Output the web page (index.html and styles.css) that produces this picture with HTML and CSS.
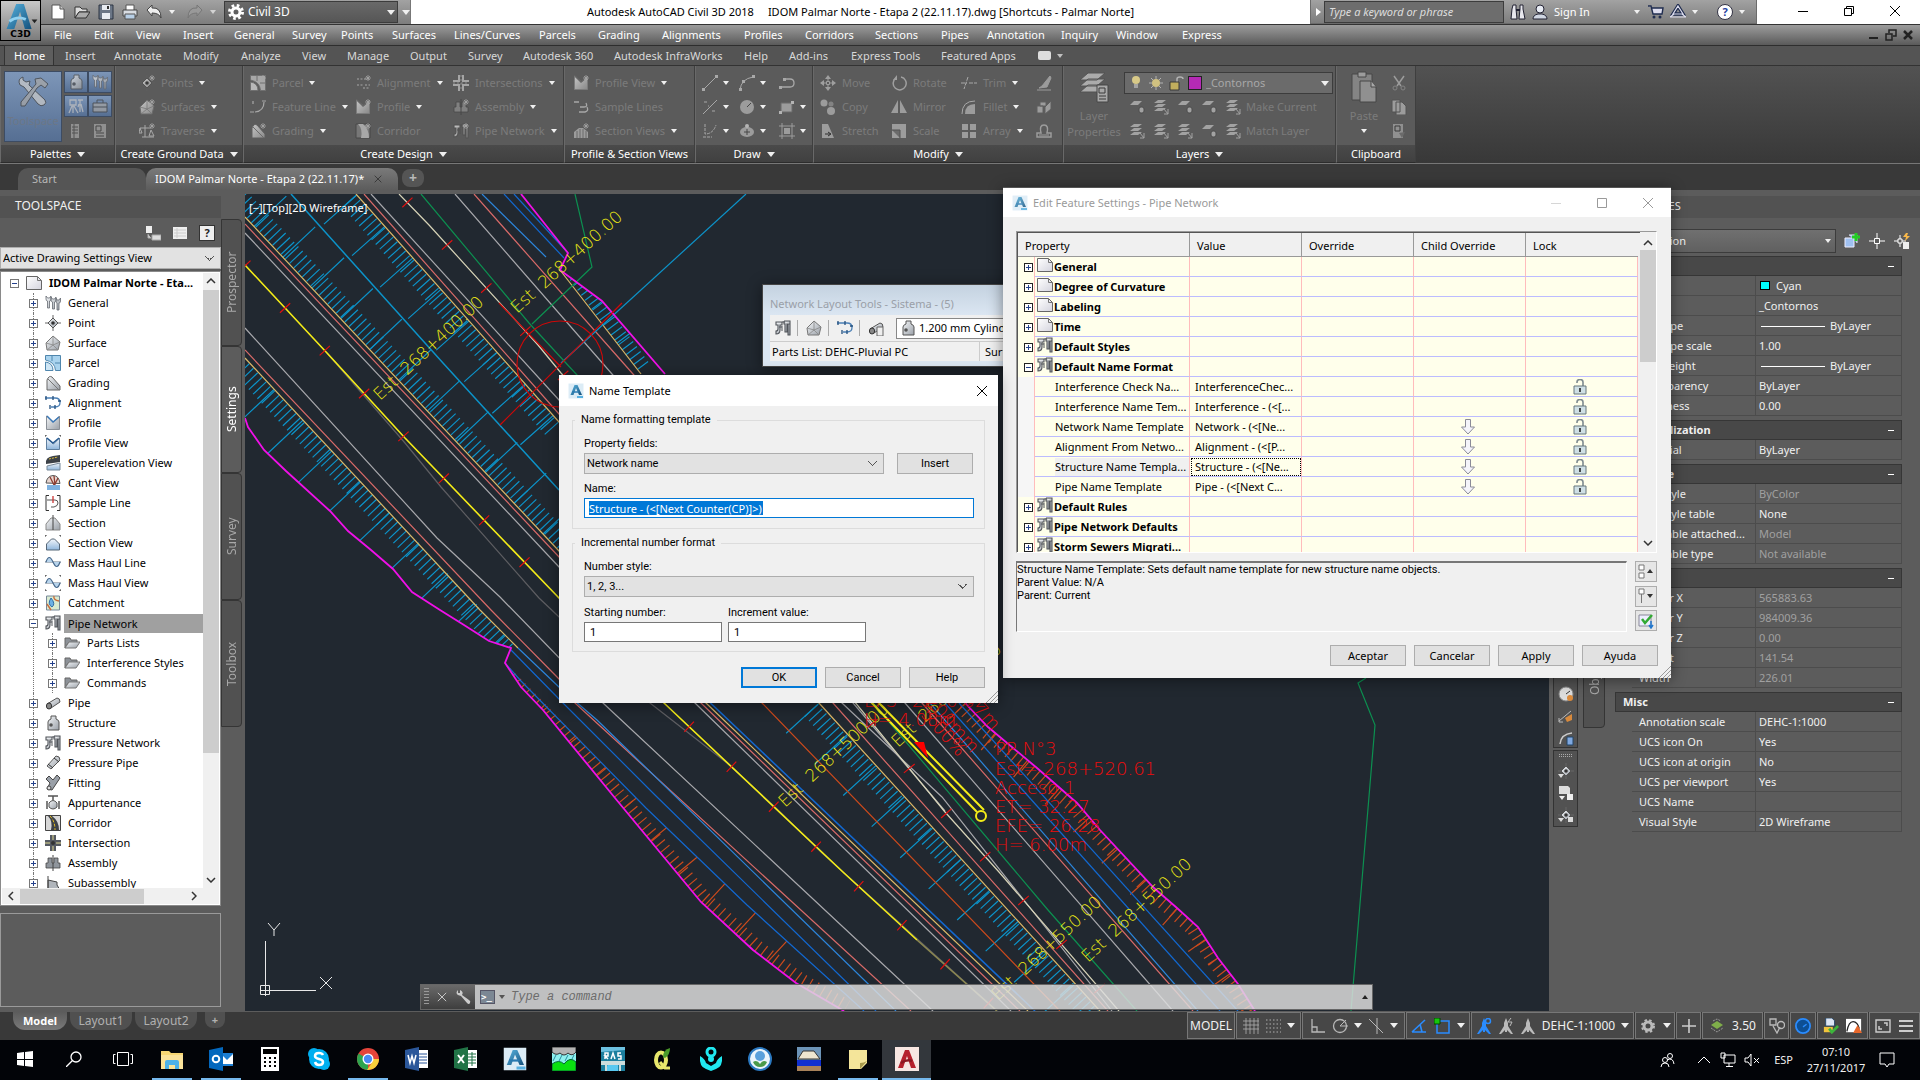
FILE: index.html
```html
<!DOCTYPE html>
<html lang="en">
<head>
<meta charset="utf-8">
<title>Autodesk AutoCAD Civil 3D 2018</title>
<link rel="stylesheet" href="styles.css">
</head>
<body>
<svg class="defs" aria-hidden="true">
<defs>
<linearGradient id="gm" x1="0" y1="0" x2="1" y2="1"><stop offset="0" stop-color="#f4f6f8"/><stop offset="1" stop-color="#9aa0a8"/></linearGradient>
<linearGradient id="gd" x1="0" y1="0" x2="1" y2="1"><stop offset="0" stop-color="#ffffff"/><stop offset="1" stop-color="#d4d4de"/></linearGradient>
<linearGradient id="gb" x1="0" y1="0" x2="0" y2="1"><stop offset="0" stop-color="#f2f6fb"/><stop offset="1" stop-color="#8fb6dc"/></linearGradient>
<linearGradient id="ga" x1="0" y1="0" x2="1" y2="1"><stop offset="0" stop-color="#58b4e0"/><stop offset="1" stop-color="#14507c"/></linearGradient>
</defs>
<symbol id="doc" viewBox="0 0 16 16"><path d="M.5 1.500h11l4 4v9H.5z" fill="url(#gd)" stroke="#666"/><path d="M11.500 1.500v4h4" fill="none" stroke="#777"/></symbol>
<symbol id="net" viewBox="0 0 16 16"><path d="M1 2h6v3H5v5q0 4-4 4v-3q2 0 2-2V5H1zM9 1h6v3M9 1v3h1v8h2V4h3v11h-2V4" fill="url(#gm)" stroke="#50545a" stroke-width="1.100"/><path d="M7 2h3M4 7h3M7 6v5" stroke="#50545a"/></symbol>
<symbol id="general" viewBox="0 0 16 16"><path d="M1 1v3q0 2 1.500 2v7h2V6Q6 6 6 4V1L4.500 3h-2zM6 2v3q0 2 1.500 2v7h2V7Q11 7 11 5V2L9.500 4h-2zM11 3v3q0 2 1 2v7h2V8q1.500 0 1.500-2V3L14 5h-2z" fill="url(#gm)" stroke="#666b72" stroke-width=".8"/></symbol>
<symbol id="point" viewBox="0 0 16 16"><path d="M8 0v16M0 8h16" stroke="#666"/><path d="M8 3l5 5-5 5-5-5z" fill="url(#gm)" stroke="#555"/><circle cx="8" cy="8" r="1.800" fill="#333"/></symbol>
<symbol id="surface" viewBox="0 0 16 16"><path d="M1 8l7-7 7 6-2 8H2z" fill="url(#gm)" stroke="#777"/><path d="M8 1v9l-7-2M8 10l7-3M8 10l-6 5M8 10l5 5" fill="none" stroke="#888" stroke-width=".8"/></symbol>
<symbol id="parcel" viewBox="0 0 16 16"><path d="M.5.500h15v15h-5Q10 7 .5 5z" fill="#a9d3ee" stroke="#4f86ad"/><path d="M.5 7Q8 8 8 15.500H.5zM7 1v5M10 8h5" fill="#cfe6f5" stroke="#4f86ad"/></symbol>
<symbol id="grading" viewBox="0 0 16 16"><path d="M2 5q2-5 5-3l8 9v4H2z" fill="url(#gm)" stroke="#666"/><path d="M3 4l11 11" stroke="#777"/></symbol>
<symbol id="align" viewBox="0 0 16 16"><path d="M0 3h10q5 0 5 4.500T10 12H6" fill="none" stroke="#4a7fb5" stroke-width="1.300"/><path d="M1 1v4M8 1v4M13 6h3M10 10v4M5 10v4" stroke="#24507e" stroke-width="1.300"/></symbol>
<symbol id="profile" viewBox="0 0 16 16"><path d="M1.500 1v13.500h13V1l-6 6z" fill="url(#gm)" stroke="#8a8f96"/><path d="M2 1l6 6 6-5" fill="none" stroke="#3a78b8" stroke-width="1.400"/></symbol>
<symbol id="profv" viewBox="0 0 16 16"><path d="M1.500 3v11.500h13V3l-6 6z" fill="url(#gb)" stroke="#5f7f9f"/><path d="M2 3l6 5 6-5" fill="none" stroke="#25588f" stroke-width="1.400"/><path d="M0 2V0h2M14 0h2v2" fill="none" stroke="#333"/></symbol>
<symbol id="super" viewBox="0 0 16 16"><path d="M1 9Q0 2 8 1l7-1v7z" fill="#3c4148"/><path d="M4 4l9-2" stroke="#e0c040" stroke-dasharray="2 1"/><path d="M2 11l13-3v7H2z" fill="url(#gb)" stroke="#789"/></symbol>
<symbol id="cant" viewBox="0 0 16 16"><path d="M1 8Q2 1 8 .5q6 0 7 8z" fill="#e8d6d0" stroke="#555"/><path d="M5 2l4 8M9 1l1 9M13 3l-3 6" stroke="#8c3c30" stroke-width="1.300"/><path d="M2 10h13v5H2z" fill="#7fb2e0"/></symbol>
<symbol id="sample" viewBox="0 0 16 16"><path d="M4 .5H1v15h3M12 .5h3v15h-3" fill="none" stroke="#333"/><path d="M2 5h8q3 0 3 3t-4 4H6" fill="none" stroke="#555"/><path d="M8 1v7" stroke="#c33" stroke-width="1.300"/></symbol>
<symbol id="section" viewBox="0 0 16 16"><path d="M1 15V9l5-6h4l5 6v6z" fill="url(#gm)" stroke="#888"/><path d="M8 0v15" stroke="#444"/></symbol>
<symbol id="sectv" viewBox="0 0 16 16"><path d="M1.500 15V9l5-5h3l5 5v6z" fill="url(#gb)" stroke="#567"/><path d="M0 2V0h2M14 0h2v2" fill="none" stroke="#333"/></symbol>
<symbol id="mass" viewBox="0 0 16 16"><path d="M0 7h16" stroke="#678"/><path d="M1 7q3-9 7 0t7 0" fill="#b8d4ec" stroke="#47698c" stroke-width="1.200"/></symbol>
<symbol id="massv" viewBox="0 0 16 16"><path d="M0 8h16" stroke="#678"/><path d="M1 8q3-9 7 0t7 0" fill="#b8d4ec" stroke="#47698c" stroke-width="1.200"/><path d="M0 2V0h2M14 0h2v2M0 14v2h2M14 16h2v-2" fill="none" stroke="#333"/></symbol>
<symbol id="catch" viewBox="0 0 16 16"><path d="M1.500 1h13v14h-13z" fill="#d9ead0" stroke="#789"/><path d="M2 9l4 6M9 1q-1 4 5 5" stroke="#c86c3c" fill="none" stroke-width="1.400"/><path d="M6 3q5 6 1 9-5-3-1-9z" fill="#6cb0e4" stroke="#2e6ea8"/></symbol>
<symbol id="folder" viewBox="0 0 16 16"><path d="M1 3h5l1 2h6v3H4l-3 5z" fill="#8c9197" stroke="#666"/><path d="M1 13l4-6h11l-4 6z" fill="url(#gm)" stroke="#777"/></symbol>
<symbol id="pipe" viewBox="0 0 16 16"><path d="M2 9L12 3q3 0 3 4L6 13z" fill="url(#gm)" stroke="#555"/><ellipse cx="4" cy="11" rx="2.600" ry="3" fill="#888" stroke="#333"/></symbol>
<symbol id="struct" viewBox="0 0 16 16"><path d="M6 1h5v3q3 1 3 3v8H3V7q0-2 3-3z" fill="url(#gm)" stroke="#555"/><circle cx="6" cy="10" r="1.800" fill="#555"/></symbol>
<symbol id="ppipe" viewBox="0 0 16 16"><path d="M2 11L11 1q4 0 4 4L6 14z" fill="url(#gm)" stroke="#555"/><path d="M3 9l5 4M9 3l5 4" stroke="#333"/></symbol>
<symbol id="fitting" viewBox="0 0 16 16"><path d="M1 4l3-3 4 4 4-5 3 3-8 12-5-1 3-6z" fill="#9aa0a8" stroke="#444"/><circle cx="4" cy="13" r="2" fill="#ddd" stroke="#444"/></symbol>
<symbol id="appurt" viewBox="0 0 16 16"><path d="M3 1h10M8 1v4M2 6v8M14 6v8" stroke="#555" stroke-width="1.500"/><path d="M4 8q4-5 8 0v4q-4 4-8 0z" fill="url(#gm)" stroke="#555"/></symbol>
<symbol id="corridor" viewBox="0 0 16 16"><path d="M.5.500h15v15H.5z" fill="#d8d8d8" stroke="#444"/><path d="M3 1h4q7 5 7 14H6Q8 6 3 1z" fill="#3c4148"/><path d="M5 1q5 5 5 14" stroke="#e8c020" fill="none" stroke-dasharray="3 1.500"/></symbol>
<symbol id="inter" viewBox="0 0 16 16"><path d="M5 0h6v5h5v6h-5v5H5v-5H0V5h5z" fill="#555a62"/><path d="M8 0v5M8 11v5M0 8h5M11 8h5" stroke="#e0d890"/><circle cx="8" cy="8" r="2" fill="#333"/></symbol>
<symbol id="cross" viewBox="0 0 16 16"><path d="M6 0v6H0M10 0v6h6M6 16v-6H0M10 16v-6h6" fill="none" stroke="#c8c8c8" stroke-width="2"/><path d="M8 0v16M0 8h16" stroke="#aaa" stroke-dasharray="2 2"/></symbol>
<symbol id="asm" viewBox="0 0 16 16"><path d="M3 3h4v5h2V3h4v5h2v5H1V8h2z" fill="#8f959c" stroke="#444" stroke-width=".8"/><path d="M8 0v16" stroke="#444"/></symbol>
<symbol id="sub" viewBox="0 0 16 16"><path d="M3 1v14M3 5l9 2v3l3 5H3z" fill="#b0b5bb" stroke="#444"/></symbol>
<symbol id="star" viewBox="0 0 16 16"><path d="M13 0v6M10 3h6M11 1l4 4M15 1l-4 4" stroke="#c8c8c8" stroke-width=".8"/></symbol>
<symbol id="logo" viewBox="0 0 16 16"><path d="M.5.500h15v15H.5z" fill="#dcecf6"/><path d="M6.500 2h3L14 12h-3l-3-7-2.500 7H2.500z" fill="url(#ga)"/><path d="M4 9h7" stroke="#2a7ab0" stroke-width="1.500"/><path d="M9 14h6" stroke="#58b0e0" stroke-width="2"/></symbol>
<symbol id="lock" viewBox="0 0 14 16"><path d="M4 4V3q0-2.500 3-2.500T10 3v4" fill="none" stroke="#7d8a8f" stroke-width="1.600"/><path d="M1 7h12v8H1z" fill="#cfe0e6" stroke="#66777d"/><path d="M7 9v4" stroke="#222" stroke-width="1.600"/></symbol>
<symbol id="down" viewBox="0 0 14 16"><path d="M4.500 .5h5V8h4L7 15 .5 8h4z" fill="#f4f4fa" stroke="#8b8b98"/></symbol>
<symbol id="lay" viewBox="0 0 16 16"><path d="M5 1h8l-4 3H1zM5 5h8l-4 3H1zM5 9h8l-4 3H1z" fill="#c4c4c4"/><path d="M11 10l4 5M15 10v5h-4" stroke="#c4c4c4" fill="none"/></symbol>
<symbol id="lay1" viewBox="0 0 16 16"><path d="M5 2h8L9 6H1z" fill="#c4c4c4"/><rect x="10" y="8" width="5" height="6" rx="2" fill="#c4c4c4" stroke="#4c4c4c"/></symbol>
<symbol id="arrows" viewBox="0 0 16 16"><path d="M8 0l3 4H5zM8 16l3-4H5zM0 8l4-3v6zM16 8l-4-3v6z" fill="#c0c0c0"/><path d="M8 4v2M8 10v2M4 8h2M10 8h2" stroke="#c0c0c0"/><path d="M6.500 6.500h3v3h-3z" fill="none" stroke="#c0c0c0"/></symbol>
<symbol id="rot" viewBox="0 0 16 16"><path d="M5 3a6.500 6.500 0 1 0 5-1" fill="none" stroke="#c0c0c0" stroke-width="1.500"/><path d="M6 0v5H2z" fill="#c0c0c0"/></symbol>
<symbol id="x" viewBox="0 0 12 12"><path d="M1 1l10 10M11 1L1 11" stroke="currentColor" fill="none"/></symbol>
<symbol id="chev" viewBox="0 0 10 6"><path d="M1 1l4 4 4-4" fill="none" stroke="currentColor" stroke-width="1.500"/></symbol>
<symbol id="tripod" viewBox="0 0 16 16"><path d="M8 0l2 5v3l5 8h-2l-4-4v2H7v-2l-4 4H1l5-8V5z" fill="currentColor"/></symbol>
</svg>

<header class="titlebar">
  <div class="qat">
    <button title="New"><svg><path d="M2 1h8l4 4v10H2z" fill="#fff" stroke="#555"/><path d="M10 1v4h4" fill="#ccc" stroke="#555"/></svg></button>
    <button title="Open"><svg><path d="M1 3h5l2 2h5v3H5l-4 6z" fill="#ddd" stroke="#333"/><path d="M1 14l4-6h11l-4 6z" fill="#aaa" stroke="#333"/></svg></button>
    <button title="Save"><svg><path d="M1 1h14v14H1z" fill="#6b7686" stroke="#2c3442"/><path d="M4 1h8v5H4zM4 9h8v6H4z" fill="#e8ecf2"/><path d="M9 2h2v3H9z" fill="#333"/></svg></button>
    <button title="Plot"><svg><path d="M4 1h8v6H4z" fill="#fff" stroke="#555"/><path d="M1 6h14v6H1z" fill="#d8dce2" stroke="#444"/><path d="M3 10h10v5H3z" fill="#b8cfe6" stroke="#555"/></svg></button>
    <button title="Undo"><svg><path d="M1 6l5-5v3q9-1 9 10-2-5-9-5v3z" fill="#eee" stroke="#444"/></svg></button><i class="ar"></i>
    <button title="Redo"><svg><path d="M15 6l-5-5v3Q1 3 1 14q2-5 9-5v3z" fill="#999" stroke="#777"/></svg></button><i class="ar dim"></i>
    <div class="combo wspick"><svg><circle cx="8" cy="8" r="4" fill="none" stroke="#fff" stroke-width="3"/><circle cx="8" cy="8" r="6.500" fill="none" stroke="#fff" stroke-width="3" stroke-dasharray="2.600 2.500"/></svg><select aria-label="Workspace"><option>Civil 3D</option></select><i class="ar big"></i></div>
    <i class="ar bar"></i>
  </div>
  <div class="caption"><span>Autodesk AutoCAD Civil 3D 2018</span><span>IDOM Palmar Norte - Etapa 2 (22.11.17).dwg [Shortcuts - Palmar Norte]</span></div>
  <div class="info">
    <i class="ar east"></i>
    <input type="text" aria-label="Search" placeholder="Type a keyword or phrase">
    <button title="Search"><svg><path d="M3 1h3v4l1 10H1l1-10zM10 1h3v4l2 10H9l1-10z" fill="#e8e8ee" stroke="#223"/><path d="M6 6h4" stroke="#223" stroke-width="2"/></svg></button>
    <button class="sign"><svg><circle cx="8" cy="5" r="4" fill="#e8ecf4" stroke="#223"/><path d="M1 15q0-4 5-5h4q5 1 5 5z" fill="#d0d6e2" stroke="#223"/></svg><span>Sign In</span><i class="ar"></i></button>
    <button title="Store"><svg><path d="M0 2h3l2 8h9l1-6H4" fill="#dde" stroke="#1f2c4f" stroke-width="1.400"/><circle cx="6" cy="13" r="1.500" fill="#1f2c4f"/><circle cx="12" cy="13" r="1.500" fill="#1f2c4f"/></svg></button>
    <button title="Autodesk App Store"><svg><path d="M8 2l5 8H3z" fill="none" stroke="#1f2c4f" stroke-width="3.500"/><path d="M8 2l5 8H3zM0 13l4-3h8l4 3z" fill="none" stroke="#dde" stroke-width="1.200"/></svg></button><i class="ar"></i>
    <button class="help" title="Help">?</button><i class="ar"></i>
  </div>
  <div class="wins">
    <button title="Minimize"><svg viewBox="0 0 12 12"><path d="M1 6.500h10" stroke="#000"/></svg></button>
    <button title="Restore"><svg viewBox="0 0 12 12"><path d="M1.500 3.500h7v7h-7zM3.500 3V1.500h7v7H9" fill="none" stroke="#000"/></svg></button>
    <button title="Close"><svg><use href="#x"/></svg></button>
  </div>
</header>

<nav class="menubar">
  <a href="#">File</a><a href="#">Edit</a><a href="#">View</a><a href="#">Insert</a><a href="#">General</a><a href="#">Survey</a><a href="#">Points</a><a href="#">Surfaces</a><a href="#">Lines/Curves</a><a href="#">Parcels</a><a href="#">Grading</a><a href="#">Alignments</a><a href="#">Profiles</a><a href="#">Corridors</a><a href="#">Sections</a><a href="#">Pipes</a><a href="#">Annotation</a><a href="#">Inquiry</a><a href="#">Window</a><a href="#">Express</a>
  <span class="mdi"><svg viewBox="0 0 12 12"><path d="M1 9h9" stroke="#222" stroke-width="2"/></svg><svg viewBox="0 0 12 12"><path d="M1 5h6v6H1zM4 4V1h7v6H8" fill="none" stroke="#222" stroke-width="1.500"/></svg><svg viewBox="0 0 12 12"><path d="M2 2l8 8M10 2l-8 8" stroke="#222" stroke-width="2.500"/></svg></span>
</nav>
<button class="app" title="Application menu"><svg viewBox="0 0 36 28"><path d="M13 1h8l8 26h-7L17 9l-6 18H3z" fill="url(#ga)"/><path d="M6 19q8-6 17-2" stroke="#8fd0f0" stroke-width="3" fill="none"/><path d="M29 17h6l-3 4z" fill="#222"/></svg><span>C3D</span></button>

<nav class="tabs">
  <a href="#" class="on">Home</a><a href="#">Insert</a><a href="#">Annotate</a><a href="#">Modify</a><a href="#">Analyze</a><a href="#">View</a><a href="#">Manage</a><a href="#">Output</a><a href="#">Survey</a><a href="#">Autodesk 360</a><a href="#">Autodesk InfraWorks</a><a href="#">Help</a><a href="#">Add-ins</a><a href="#">Express Tools</a><a href="#">Featured Apps</a>
  <span class="mini"><b></b><i class="ar dim"></i></span>
</nav>

<section class="ribbon">
  <div class="panel p-pal">
    <div class="body">
      <button class="blue large"><svg viewBox="0 0 32 32"><path d="M6 1q-6 2-3 8l4 2 14 17q3 3 6 1t1-5L12 9l1-4-4 1-3-2z" fill="#d0d4da" stroke="#445"/><path d="M18 3l6-1 7 6-3 4-4-3-4 3L8 30H4v-4L19 8z" fill="#aab0ba" stroke="#445"/></svg>Toolspace</button>
      <div class="six">
        <button class="blue" title="Prospector"><svg><use href="#struct"/></svg></button><button class="blue" title="Settings"><svg><use href="#general"/></svg></button>
        <button class="blue" title="Survey"><svg><path d="M2 2h6v5H2zM5 7v8M4 8l-3 7M6 8l4 7M10 2h5M12 2v12M11 6l-1 3M13 6l2 8" fill="none" stroke="#ccc" stroke-width="1.300"/></svg></button><button class="blue" title="Toolbox"><svg><path d="M1 5h14v9H1z" fill="#aab" stroke="#445"/><path d="M5 5V2h6v3M1 9h14" fill="none" stroke="#445"/></svg></button>
        <button title="Palettes"><svg><path d="M3 1h8v14H3z" fill="#aaa"/><path d="M4 4h6M4 7h6M4 10h6M6 1v14" stroke="#555"/></svg></button><button title="Properties"><svg><path d="M2 1h12v14H2z" fill="#aaa"/><path d="M4 3h5v5H4zM4 10h8M4 13h8" fill="none" stroke="#444"/></svg></button>
      </div>
    </div>
    <h2>Palettes <i class="ar big"></i></h2>
  </div>
  <div class="panel p-ground">
    <div class="body">
      <button><svg><use href="#point"/><use href="#star"/></svg>Points<i class="ar"></i></button>
      <button><svg><use href="#surface"/><use href="#star"/></svg>Surfaces<i class="ar"></i></button>
      <button><svg><path d="M6 2v12M1 5h11M1 5l-1 5h3zM12 7l-2 6h5zM3 14h12" fill="none" stroke="#ccc"/><use href="#star"/></svg>Traverse<i class="ar"></i></button>
    </div>
    <h2>Create Ground Data <i class="ar big"></i></h2>
  </div>
  <div class="panel p-design">
    <div class="body">
      <button><svg><use href="#parcel"/><use href="#star"/></svg>Parcel<i class="ar"></i></button>
      <button><svg><path d="M2 4h12M2 10h6M10 10h5M8 13h6" stroke="#ccc" stroke-dasharray="2 1.500"/><use href="#star"/></svg>Alignment<i class="ar"></i></button>
      <button><svg><use href="#cross"/></svg>Intersections<i class="ar"></i></button>
      <button><svg><path d="M14 3q0 9-9 10M0 13h4M3 2v3M12 2h4" fill="none" stroke="#ccc" stroke-width="1.200"/></svg>Feature Line<i class="ar"></i></button>
      <button><svg><use href="#profile"/><use href="#star"/></svg>Profile<i class="ar"></i></button>
      <button><svg><use href="#asm"/><use href="#star"/></svg>Assembly<i class="ar"></i></button>
      <button><svg><use href="#grading"/><use href="#star"/></svg>Grading<i class="ar"></i></button>
      <button><svg><path d="M1 1h14v14H1z" fill="#888" stroke="#444"/><path d="M3 1h5q6 5 6 14H6Q8 6 3 1z" fill="#ccc"/><use href="#star"/></svg>Corridor</button>
      <button><svg><use href="#net"/><use href="#star"/></svg>Pipe Network<i class="ar"></i></button>
    </div>
    <h2>Create Design <i class="ar big"></i></h2>
  </div>
  <div class="panel p-prof">
    <div class="body">
      <button><svg><use href="#profile"/><use href="#star"/></svg>Profile View<i class="ar"></i></button>
      <button><svg><path d="M1 3h5M7 8h4q4 0 2-4M6 13h6q4-1 2-5" fill="none" stroke="#ccc" stroke-width="1.300"/></svg>Sample Lines</button>
      <button><svg><path d="M1 15V9l5-4h4l5 4v6z" fill="#bbb"/><path d="M4 8v7M7 6v9M10 6v9M13 8v7" stroke="#777"/><use href="#star"/></svg>Section Views<i class="ar"></i></button>
    </div>
    <h2>Profile &amp; Section Views</h2>
  </div>
  <div class="panel p-draw">
    <div class="body">
      <button title="Line"><svg><path d="M2 14L14 2" stroke="#ccc"/><path d="M0 13h3v3H0zM13 0h3v3h-3z" fill="#ccc"/></svg><i class="ar"></i></button>
      <button title="Arc"><svg><path d="M1 15Q2 4 14 2" fill="none" stroke="#ccc"/><path d="M0 13h3v3H0zM13 0h3v3h-3zM3 5h3v3H3z" fill="#ccc"/></svg><i class="ar"></i></button>
      <button title="Polyline"><svg><path d="M3 12h8q4 0 4-4t-4-4H5" fill="none" stroke="#ccc" stroke-width="1.300"/><path d="M0 11h3v3H0zM4 3h3v3H4z" fill="#ccc"/></svg></button>
      <button title="Construction line"><svg><path d="M1 15L15 1" stroke="#ccc"/><path d="M2 3h3M10 12h3M6 7h1" stroke="#ccc"/></svg><i class="ar"></i></button>
      <button title="Circle"><svg><circle cx="8" cy="8" r="7" fill="#bbb"/><path d="M8 8l4-4" stroke="#444"/></svg><i class="ar"></i></button>
      <button title="Rectangle"><svg><path d="M2 4h11v9H2z" fill="#bbb" stroke="#777"/><path d="M0 12h3v3H0zM12 2h3v3h-3z" fill="#ddd"/></svg><i class="ar"></i></button>
      <button title="Curve"><svg><path d="M3 1v10q8 0 11-9M1 14h9" fill="none" stroke="#ccc" stroke-dasharray="3 1"/></svg><i class="ar"></i></button>
      <button title="Ellipse"><svg><ellipse cx="8" cy="9" rx="7" ry="5" fill="#bbb"/><path d="M8 6v6M5 9h6" stroke="#444"/><circle cx="8" cy="3" r="2" fill="#ddd"/></svg><i class="ar"></i></button>
      <button title="Hatch"><svg><path d="M3 0v16M13 0v16M0 3h16M0 13h16" stroke="#bbb"/><path d="M5 5h6v6H5z" fill="#bbb"/></svg><i class="ar"></i></button>
    </div>
    <h2>Draw <i class="ar big"></i></h2>
  </div>
  <div class="panel p-mod">
    <div class="body">
      <button><svg><use href="#arrows"/></svg>Move</button>
      <button><svg><use href="#rot"/></svg>Rotate</button>
      <button><svg><path d="M0 8h6M8 8h8M7 2L3 14" stroke="#ccc" stroke-dasharray="4 1"/></svg>Trim<i class="ar"></i></button>
      <button title="Erase"><svg><path d="M14 1L6 11l-3 2 8-1 4-9zM1 15h14" fill="#bbb" stroke="#bbb"/></svg></button>
      <button><svg><circle cx="4" cy="4" r="3.500" fill="#bbb"/><circle cx="11" cy="5" r="2.500" fill="#999"/><circle cx="11" cy="12" r="4" fill="#bbb"/></svg>Copy</button>
      <button><svg><path d="M7 1v13H0zM9 1v13h7z" fill="#bbb"/></svg>Mirror</button>
      <button><svg><path d="M1 15Q1 2 14 2" fill="none" stroke="#ccc"/><path d="M4 15Q4 5 14 5v10z" fill="#bbb"/></svg>Fillet<i class="ar"></i></button>
      <button title="Explode"><svg><path d="M1 7h6v7H1zM4 3h6v4H4zM9 8l6-6v8l-6 5z" fill="#bbb" stroke="#666"/></svg></button>
      <button><svg><path d="M2 1h6l6 14H2z" fill="#bbb"/><path d="M5 11h5M8 9l3 2-3 2" stroke="#222" fill="none"/></svg>Stretch</button>
      <button><svg><path d="M1 1h14v14H1z" fill="#bbb"/><path d="M1 7h8v8" fill="#777" stroke="#555"/></svg>Scale</button>
      <button><svg><path d="M1 1h6v6H1zM9 1h6v6H9zM1 9h6v6H1zM9 9h6v6H9z" fill="#bbb"/></svg>Array<i class="ar"></i></button>
      <button title="Offset"><svg><path d="M1 14h14v-4h-4q2-8-3-8t-3 8H1z" fill="none" stroke="#bbb" stroke-width="1.500"/><path d="M3 12h10" stroke="#bbb"/></svg></button>
    </div>
    <h2>Modify <i class="ar big"></i></h2>
  </div>
  <div class="panel p-lay">
    <div class="body">
      <button class="large"><svg viewBox="0 0 32 32"><path d="M10 2h17l-8 7H2zM10 8h17l-8 7H2zM10 14h17l-8 7H2z" fill="#d0d0d0" stroke="#555"/><path d="M19 14h11v17H19z" fill="#ccc" stroke="#444"/><path d="M21 17h6v5h-6zM21 25h7M21 28h7" fill="none" stroke="#333"/></svg>Layer<br>Properties</button>
      <div class="layr">
        <div class="combo laypick"><svg><circle cx="8" cy="5" r="4" fill="#e4d48c"/><path d="M6 9h4v4H6z" fill="#aaa"/></svg><svg><circle cx="8" cy="8" r="4" fill="#dccb84"/><path d="M8 1v3M8 12v3M1 8h3M12 8h3M3 3l2 2M11 11l2 2M13 3l-2 2M3 13l2-2" stroke="#bbb"/></svg><svg><path d="M9 7V4q0-2 3-2t3 2" fill="none" stroke="#bbb" stroke-width="1.500"/><path d="M2 7h9v8H2z" fill="#cbb65c" stroke="#333"/></svg><b class="sw"></b><select aria-label="Layer"><option>_Contornos</option></select><i class="ar big"></i></div>
        <div class="lrow"><svg><use href="#lay1"/></svg><svg><use href="#lay"/></svg><svg><use href="#lay1"/></svg><svg><use href="#lay1"/></svg><svg><use href="#lay"/></svg><span>Make Current</span></div>
        <div class="lrow"><svg><use href="#lay"/></svg><svg><use href="#lay"/></svg><svg><use href="#lay"/></svg><svg><use href="#lay1"/></svg><svg><use href="#lay"/></svg><span>Match Layer</span></div>
      </div>
    </div>
    <h2>Layers <i class="ar big"></i></h2>
  </div>
  <div class="panel p-clip">
    <div class="body">
      <button class="large"><svg viewBox="0 0 32 32"><path d="M4 3h20v26H4z" fill="#9a9a9a" stroke="#444"/><path d="M10 1h8v5h-8z" fill="#bbb" stroke="#444"/><path d="M12 10h11l5 6v15H12z" fill="#aaa" stroke="#444"/><path d="M23 10v6h5" fill="#ccc" stroke="#444"/></svg>Paste<i class="ar"></i></button>
      <div class="three">
        <svg><path d="M3 1l7 10M13 1L6 11" stroke="#bbb" stroke-width="1.500"/><circle cx="4" cy="13" r="2" fill="none" stroke="#999"/><circle cx="12" cy="13" r="2" fill="none" stroke="#999"/></svg>
        <svg><path d="M1 1h8v12H1zM5 3h6l4 4v9H5z" fill="#bbb" stroke="#555"/></svg>
        <svg><path d="M2 1h10v14H2z" fill="#aaa"/><path d="M4 3h5v5H4z" fill="none" stroke="#333"/><path d="M8 10l6-1-3 6z" fill="#777"/></svg>
      </div>
    </div>
    <h2>Clipboard</h2>
  </div>
</section>

<nav class="files">
  <a href="#" class="ft">Start</a>
  <a href="#" class="ft on">IDOM Palmar Norte - Etapa 2 (22.11.17)* <svg><use href="#x"/></svg></a>
  <button class="plus">+</button>
</nav>

<main class="work">
  <aside class="toolspace">
    <div class="tsmain">
      <h1>TOOLSPACE</h1>
      <div class="tsbar">
        <button title="Item view"><svg><path d="M1 1h6v7H1z" fill="#eee"/><path d="M7 10h9v5H7zM3 9v4h3" fill="#ddd" stroke="#aaa"/></svg></button>
        <button title="Preview"><svg><path d="M1 2h14v12H1z" fill="#eee"/><path d="M5 3v10M2 5h12M2 8h12M2 11h12" stroke="#ccc"/></svg></button>
        <button class="q" title="Help">?</button>
      </div>
      <select class="light" aria-label="View"><option>Active Drawing Settings View</option></select>
      <div class="treebox">
        <ul class="tree">
          <li class="root"><i class="ex minus"></i><svg><use href="#doc"/></svg><span>IDOM Palmar Norte - Eta...</span></li>
          <li><i class="ex"></i><svg><use href="#general"/></svg><span>General</span></li>
          <li><i class="ex"></i><svg><use href="#point"/></svg><span>Point</span></li>
          <li><i class="ex"></i><svg><use href="#surface"/></svg><span>Surface</span></li>
          <li><i class="ex"></i><svg><use href="#parcel"/></svg><span>Parcel</span></li>
          <li><i class="ex"></i><svg><use href="#grading"/></svg><span>Grading</span></li>
          <li><i class="ex"></i><svg><use href="#align"/></svg><span>Alignment</span></li>
          <li><i class="ex"></i><svg><use href="#profile"/></svg><span>Profile</span></li>
          <li><i class="ex"></i><svg><use href="#profv"/></svg><span>Profile View</span></li>
          <li><i class="ex"></i><svg><use href="#super"/></svg><span>Superelevation View</span></li>
          <li><i class="ex"></i><svg><use href="#cant"/></svg><span>Cant View</span></li>
          <li><i class="ex"></i><svg><use href="#sample"/></svg><span>Sample Line</span></li>
          <li><i class="ex"></i><svg><use href="#section"/></svg><span>Section</span></li>
          <li><i class="ex"></i><svg><use href="#sectv"/></svg><span>Section View</span></li>
          <li><i class="ex"></i><svg><use href="#mass"/></svg><span>Mass Haul Line</span></li>
          <li><i class="ex"></i><svg><use href="#massv"/></svg><span>Mass Haul View</span></li>
          <li><i class="ex"></i><svg><use href="#catch"/></svg><span>Catchment</span></li>
          <li class="sel"><i class="ex minus"></i><svg><use href="#net"/></svg><span>Pipe Network</span></li>
          <li class="kid"><i class="ex"></i><svg><use href="#folder"/></svg><span>Parts Lists</span></li>
          <li class="kid"><i class="ex"></i><svg><use href="#folder"/></svg><span>Interference Styles</span></li>
          <li class="kid"><i class="ex"></i><svg><use href="#folder"/></svg><span>Commands</span></li>
          <li><i class="ex"></i><svg><use href="#pipe"/></svg><span>Pipe</span></li>
          <li><i class="ex"></i><svg><use href="#struct"/></svg><span>Structure</span></li>
          <li><i class="ex"></i><svg><use href="#net"/></svg><span>Pressure Network</span></li>
          <li><i class="ex"></i><svg><use href="#ppipe"/></svg><span>Pressure Pipe</span></li>
          <li><i class="ex"></i><svg><use href="#fitting"/></svg><span>Fitting</span></li>
          <li><i class="ex"></i><svg><use href="#appurt"/></svg><span>Appurtenance</span></li>
          <li><i class="ex"></i><svg><use href="#corridor"/></svg><span>Corridor</span></li>
          <li><i class="ex"></i><svg><use href="#inter"/></svg><span>Intersection</span></li>
          <li><i class="ex"></i><svg><use href="#asm"/></svg><span>Assembly</span></li>
          <li><i class="ex"></i><svg><use href="#sub"/></svg><span>Subassembly</span></li>
        </ul>
        <div class="vsb"><svg class="up"><use href="#chev"/></svg><b></b><svg><use href="#chev"/></svg></div>
        <div class="hsb"><svg class="lf"><use href="#chev"/></svg><b></b><svg class="rt"><use href="#chev"/></svg></div>
      </div>
      <div class="preview"></div>
    </div>
    <nav class="vtabs"><a href="#">Prospector</a><a href="#" class="on">Settings</a><a href="#">Survey</a><a href="#">Toolbox</a></nav>
  </aside>

  <section class="canvas">
    <svg viewBox="245 194 1304 817" preserveAspectRatio="xMinYMin slice">
      <defs>
        <clipPath id="cutL"><path d="M245 358L518 648L511 648L489 641L464 625L440 610L412 592L393 569L371 550L348 531L330 511L286 471L264 450L248 427L245 417z"/></clipPath>
        <clipPath id="cutR"><path d="M566 275L660 400L690 400L602 301L560 270z"/></clipPath>
        <clipPath id="fillL"><path d="M505 663L521 687L543 710L615 798L701 902L753 950L796 983L844 1011L864 1011L747 905L646 808L522 680z"/></clipPath>
        <clipPath id="fillR"><path d="M965 703L988 727L1037 768L1077 803L1100 830L1154 888L1177 908L1198 927L1218 958L1238 984L1255 1011L1100 1011L900 703z"/></clipPath>
      </defs>
      <g class="ln cy">
        <g class="h19"><path d="M232 189L566 544"/><path d="M349 201L552 429"/><path d="M811 710L1093 1018"/></g>
        <g class="h44"><path d="M241 180L575 536"/><path d="M340 209L543 437"/><path d="M802 718L1084 1026"/></g>
        <g clip-path="url(#cutL)"><path class="h19" d="M238 365L511 655"/><path class="long" d="M245 358L518 648"/></g>
        <g clip-path="url(#cutR)"><path class="h19 w30" d="M566 275L640 374"/><path class="long" d="M566 275L640 374"/></g>
      </g>
      <g class="ln or">
        <g clip-path="url(#fillL)"><path class="h24" d="M505 663L521 687L543 710L615 798L701 902L753 950L796 983L844 1011"/><path class="long" d="M543 710L701 902L796 990"/></g>
        <g clip-path="url(#fillR)"><path class="h24" d="M965 703L988 727L1037 768L1077 803L1100 830L1154 888L1177 908L1198 927L1218 958L1238 984L1255 1011"/><path class="h44" d="M965 703L988 727L1037 768L1077 803L1154 888L1198 927L1238 984L1255 1011"/></g>
        <path d="M720 658L762 703L1060 1011"/>
      </g>
      <g class="ln gy">
        <path d="M245 328L437 538L500 597L603 703L933 1011"/><path d="M245 233L560 568L695 703L1011 1011"/>
        <path d="M371 194L559 400L842 703L942 797L1112 1011"/><path d="M455 194L612 374L905 703L1173 1011"/><path d="M842 690L945 811"/>
      </g>
      <path class="ln dk" d="M327 353L405 443L441 487L539 598L650 703L727 763L776 808L822 853L997 1011"/>
      <g class="ln sa"><path d="M245 350L491 610L560 680L575 703L911 1011"/><path d="M245 224L560 558L701 703L1020 1011"/><path d="M364 194L559 414L833 703L1108 1011"/><path d="M474 194L633 374L922 703L1193 1011"/></g>
      <g class="ln tan"><path d="M245 358L480 610L518 648"/><path d="M245 217L559 551L706 703L1028 1011"/><path d="M356 194L559 422L819 703L1100 1011"/><path d="M560 270L641 374"/></g>
      <g class="ln bl"><path d="M518 648L560 688L597 720L896 1011"/><path d="M482 194L546 257"/><path d="M930 703L1198 1011"/></g>
      <g class="ln nb"><path d="M504 194L564 258"/><path d="M514 194L568 253"/><path d="M945 703L1220 1011"/><path d="M959 703L1238 1011"/><path d="M505 663L521 681L646 808L747 905L864 1011"/><path d="M511 650L560 700L655 795L876 1011"/><path class="bold" d="M700 693L1035 1011"/></g>
      <g class="ln cy bold"><path d="M291 194L443 363L559 490"/><path class="thin" d="M746 194L561 363"/></g>
      <path class="ln cream" d="M399 194L429 225L538 345L561 373L845 690L945 812L999 872L1119 1011"/>
      <g class="ln grn"><path d="M421 194L529 323L577 375L873 703L1048 910L1137 1011"/><path d="M575 194L592 267L532 324"/><path d="M1366 678L1358 683L1375 725L1351 1011"/></g>
      <path class="ln yl" d="M245 265L327 353L405 438L559 598L664 703L844 873L917 940"/><path class="ln yl pale" d="M917 940L997 1011"/>
      <path class="ticks" d="M245 265L327 353L405 438L559 598L664 703L844 873L997 1011"/>
      <path class="ticks" d="M407 202L429 225L538 345L561 373L845 690L945 812L999 872L1119 1011"/>
      <g class="ln mg"><path d="M245 418L248 427L264 450L286 471L330 511L348 531L371 550L393 569L412 592L440 610L464 625L489 641L511 648L505 663L521 687L543 710L615 798L701 902L753 950L796 983L844 1011"/><path d="M521 194L568 253L560 270L602 301L665 374"/><path d="M965 703L988 727L1037 768L1077 803L1100 830L1154 888L1177 908L1198 927L1218 958L1238 984L1255 1011"/></g>
      <g class="ln rd"><circle cx="560" cy="364" r="43"/><path d="M499 303L561 367M622 303L500 425"/></g>
      <g class="ln ylb"><path d="M869 700L977 812M876 700L984 810"/><circle cx="981" cy="816" r="5"/></g>
      <path d="M914 742l14 16-4-16z" fill="#f00"/>
      <g class="cad">
        <text transform="translate(380 401) rotate(-43)">Est&#160; 268+400.00</text>
        <text transform="translate(517 314) rotate(-42)">Est&#160; 268+400.00</text>
        <text transform="translate(785 808) rotate(-43)">Est&#160; 268+500.00</text>
        <text transform="translate(898 748) rotate(-43)">Est&#160; 268+500.00</text>
        <text transform="translate(998 1001) rotate(-43)">Est&#160; 268+550.00</text>
        <text transform="translate(1088 963) rotate(-43)">Est&#160; 268+550.00</text>
      </g>
      <g class="cad red">
        <text x="864" y="726">H= 4.08m</text><text x="864" y="707">EFS=2270.02</text>
        <text x="995" y="755">PP N°3</text><text x="995" y="775">Est= 268+520.61</text><text x="995" y="794">Acceso 1</text><text x="995" y="813">ET= 32.27</text><text x="995" y="832">EFE= 26.28</text><text x="995" y="851">H= 6.00m</text>
        <text transform="translate(917 694) rotate(48)">1200mm</text><text transform="translate(920 715) rotate(48)">5.00%</text><text transform="translate(946 680) rotate(48)">0.277m</text>
      </g>
      <g class="ucs"><path d="M265.500 941v55M260 990.500h56M260.500 985.500h9v9h-9z"/><path d="M268 923l6 7 6-7M274 930v6M320 977l12 12M332 977l-12 12"/></g>
      <text class="vp" x="249" y="212">[−][Top][2D Wireframe]</text>
    </svg>
    <form class="cmd">
      <span class="grip"><i></i><svg><use href="#x"/></svg><svg><path d="M3 1q-3 3 0 5l3 1 6 7q2 2 3 0t-1-3L7 6q2-3-2-5l0 3-2 0z" fill="#ccc"/></svg></span>
      <b>&gt;_</b><i class="ar"></i><input type="text" aria-label="Command" placeholder="Type a command"><i class="ar upk"></i>
    </form>
  </section>

  <aside class="side">
    <div class="strip">
      <div class="grp g1"><svg><circle cx="8" cy="8" r="7" fill="#ddd" stroke="#888"/><path d="M8 8l4-3" stroke="#333"/><circle cx="12" cy="12" r="3" fill="#d98a3c"/></svg><svg><path d="M1 13L13 3M1 10v4h4" fill="none" stroke="#bbb"/><path d="M7 10l7-4v6l-5 2z" fill="#d98a3c"/></svg><svg><path d="M2 14Q3 4 14 3" fill="none" stroke="#ccc" stroke-width="1.500"/><path d="M9 7h6v8H9z" fill="#7fa8e0" stroke="#246"/></svg></div>
      <div class="grp"><i class="dots"></i><svg><use href="#point"/><path d="M0 11h6l-3 4z" fill="#ddd"/></svg><svg><path d="M1 1h9l2 2v6H1z" fill="#ddd"/><path d="M9 9h6v6H9zM1 11h6l-3 4z" fill="#eee"/></svg><svg><use href="#point"/><path d="M0 11h6l-3 4zM10 10h5v5h-5z" fill="#ddd"/></svg></div>
    </div>
    <div class="objtab"><a href="#">Object Class</a></div>
    <div class="props">
      <h1>PROPERTIES</h1>
      <div class="pick"><div class="combo"><select aria-label="Selection"><option>No selection</option></select><i class="ar"></i></div><svg><path d="M1 5h9v9H1zM5 2h8v8" fill="#9fc0f0" stroke="#eef"/><path d="M12 0v8M8 4h8" stroke="#2c2" stroke-width="3"/></svg><svg><path d="M8 0v16M0 8h16" stroke="#fff"/><path d="M5.500 5.500h5v5h-5z" fill="#5c5c5c" stroke="#fff"/></svg><svg><path d="M6 2v12M0 8h12" stroke="#fff"/><path d="M4 6h4v4H4z" fill="#5c5c5c" stroke="#fff"/><path d="M12 0l-3 4h3l-1 4 5-5h-3l1-3z" fill="#f8b84a"/><path d="M9 9h6v7H9z" fill="#eee"/></svg></div>
      <table><caption>General</caption>
        <tr><th>Color</th><td><b class="cyan"></b>Cyan</td></tr><tr><th>Layer</th><td>_Contornos</td></tr><tr><th>Linetype</th><td><b class="line"></b>ByLayer</td></tr><tr><th>Linetype scale</th><td>1.00</td></tr><tr><th>Lineweight</th><td><b class="line"></b>ByLayer</td></tr><tr><th>Transparency</th><td>ByLayer</td></tr><tr><th>Thickness</th><td>0.00</td></tr></table>
      <table><caption>3D Visualization</caption><tr><th>Material</th><td>ByLayer</td></tr></table>
      <table><caption>Plot style</caption><tr><th>Plot style</th><td class="ro">ByColor</td></tr><tr><th>Plot style table</th><td>None</td></tr><tr><th>Plot table attached...</th><td class="ro">Model</td></tr><tr><th>Plot table type</th><td class="ro">Not available</td></tr></table>
      <table><caption>View</caption><tr><th>Center X</th><td class="ro">565883.63</td></tr><tr><th>Center Y</th><td class="ro">984009.36</td></tr><tr><th>Center Z</th><td class="ro">0.00</td></tr><tr><th>Height</th><td class="ro">141.54</td></tr><tr><th>Width</th><td class="ro">226.01</td></tr></table>
      <table><caption>Misc</caption><tr><th>Annotation scale</th><td>DEHC-1:1000</td></tr><tr><th>UCS icon On</th><td>Yes</td></tr><tr><th>UCS icon at origin</th><td>No</td></tr><tr><th>UCS per viewport</th><td>Yes</td></tr><tr><th>UCS Name</th><td></td></tr><tr><th>Visual Style</th><td>2D Wireframe</td></tr></table>
    </div>
  </aside>
</main>

<footer class="status">
  <nav class="layouts"><a href="#" class="on">Model</a><a href="#">Layout1</a><a href="#">Layout2</a><button>+</button></nav>
  <div class="sb">
    <div class="s1"><button>MODEL</button></div>
    <div class="s2"><svg><path d="M3 0v16M7 0v16M11 0v16M15 0v16M0 3h16M0 7h16M0 11h16" stroke="#b0b0b0" stroke-width=".8"/></svg><svg><path d="M1 2h15M1 6h15M1 10h15M1 14h15" stroke="#b0b0b0" stroke-dasharray="1.500 2"/></svg><i class="ar big"></i></div>
    <div class="s3"><svg><path d="M2 1v13h13M2 9h5v5" fill="none" stroke="#b8b8b8" stroke-width="1.300"/></svg><svg><circle cx="8" cy="8" r="6.500" fill="none" stroke="#b8b8b8" stroke-width="1.300"/><path d="M8 8l6-6M8 8h8" stroke="#b8b8b8"/></svg><i class="ar big"></i><svg><path d="M1 1l14 14M9 0v16" stroke="#b8b8b8"/></svg><i class="ar big"></i></div>
    <div class="s4"><svg><path d="M1 14h14M1 14L14 2M9 6l2 8" stroke="#2a8cff" stroke-width="1.600" fill="none"/></svg><svg><path d="M3 3h12v12H3z" fill="none" stroke="#2a8cff" stroke-width="1.500"/><path d="M0 0h6v6H0z" fill="#16c60c" stroke="#040"/></svg><i class="ar big"></i></div>
    <div class="s5"><svg class="act"><use href="#tripod"/><circle cx="12" cy="3" r="2.500" fill="none" stroke="#2a8cff" stroke-width="1.500"/></svg><svg><use href="#tripod"/><path d="M13 0l-3 4h4l-2 4" stroke="#bbb" fill="none"/></svg><svg><use href="#tripod"/></svg><span>DEHC-1:1000</span><i class="ar big"></i></div>
    <div class="s6"><svg><circle cx="8" cy="8" r="4" fill="none" stroke="#bbb" stroke-width="3"/><circle cx="8" cy="8" r="6" fill="none" stroke="#bbb" stroke-width="2" stroke-dasharray="2.400 2.400"/></svg><i class="ar big"></i></div>
    <div class="s7"><svg><path d="M8 1v14M1 8h14" stroke="#ccc" stroke-width="1.600"/></svg></div>
    <div class="s8"><svg><path d="M8 3l6 4-6 4-6-4z" fill="#7fae4a"/><path d="M2 10l6 4 6-4M4 3l4-2 4 2" fill="none" stroke="#999" stroke-dasharray="2 1"/></svg><span>3.50</span></div>
    <div class="s9"><svg><path d="M1 1h6v6H1zM4 8l4 7 3-6" fill="none" stroke="#bbb" stroke-width="1.300"/><circle cx="12" cy="7" r="3.500" fill="none" stroke="#bbb" stroke-width="1.300"/></svg></div>
    <div class="s10"><svg viewBox="0 0 18 18"><circle cx="9" cy="9" r="8" fill="#0d4f94" stroke="#2a8cff" stroke-width="2"/><path d="M9 10l4-3" stroke="#2a8cff" stroke-width="1.500"/></svg></div>
    <div class="s11"><svg viewBox="0 0 18 18"><path d="M3 0h7l3 3v6H3z" fill="#dde6f4" stroke="#246"/><path d="M1 10h10v6H1z" fill="#f0c33c"/><path d="M7 12l3 4 7-7" stroke="#3cb43c" stroke-width="3" fill="none"/></svg><svg viewBox="0 0 18 18"><path d="M0 1h17v15H0z" fill="#fff"/><path d="M1 15Q3 4 8 4t7 8" fill="none" stroke="#222" stroke-width="1.400"/><path d="M13 8l5 9H8z" fill="#e8682c"/></svg></div>
    <div class="s12"><svg><path d="M1 2h14v12H1z" fill="none" stroke="#ccc" stroke-width="1.400"/><path d="M4 8v3h3M9 5h3v3" fill="none" stroke="#ccc" stroke-width="1.500"/></svg><svg><path d="M1 3h14M1 8h14M1 13h14" stroke="#ccc" stroke-width="1.800"/></svg></div>
  </div>
</footer>

<div class="taskbar">
  <button title="Start"><svg viewBox="0 0 16 16"><path d="M0 2l7-1v7H0zM8 1l8-1v8H8zM0 9h7v6l-7-1zM8 9h8v7l-8-1z" fill="#fff"/></svg></button>
  <button title="Search"><svg viewBox="0 0 16 16"><circle cx="10" cy="6" r="5" fill="none" stroke="#fff" stroke-width="1.300"/><path d="M6.500 9.500L0 16" stroke="#fff" stroke-width="1.300"/></svg></button>
  <button title="Task View"><svg class="wide" viewBox="0 0 20 16"><path d="M4.500 1.500h11v13h-11zM2.500 3.500h-2v9h2M17.500 3.500h2v9h-2" fill="none" stroke="#fff"/></svg></button>
  <button class="run" title="Explorer"><svg class="b" viewBox="0 0 24 24"><path d="M1 4h8l2 2h12v16H1z" fill="#f7d774"/><path d="M1 8h22v14H1z" fill="#fbe39a"/><path d="M5 22v-7q0-2 2-2h10q2 0 2 2v7h-4v-4H9v4z" fill="#4db2ea"/></svg></button>
  <button class="run" title="Outlook"><svg class="b" viewBox="0 0 24 24"><path d="M12 6h12v13H12z" fill="#1c7fd4"/><path d="M14 9l4 4 6-6v10H14z" fill="#fff"/><path d="M0 3l14-3v24L0 21z" fill="#0468bd"/><circle cx="7" cy="12" r="3.300" fill="none" stroke="#fff" stroke-width="2"/></svg></button>
  <button title="Calculator"><svg class="b" viewBox="0 0 24 24"><path d="M3 0h18v24H3z" fill="#fff"/><path d="M5 2h14v5H5z" fill="#000"/><path d="M6 11h13M6 15h13M6 19h13" stroke="#000" stroke-width="2" stroke-dasharray="2 3"/></svg></button>
  <button title="Skype"><svg class="b" viewBox="0 0 24 24"><circle cx="12" cy="12" r="10" fill="#00aff0"/><circle cx="7" cy="7" r="6" fill="#00aff0"/><circle cx="17" cy="17" r="6" fill="#00aff0"/><path d="M16 8q-1-2-4-2-4 0-4 3 0 2 4 3t4 3q0 3-4 3-3 0-4-3" fill="none" stroke="#fff" stroke-width="2.500"/></svg></button>
  <button class="run" title="Chrome"><svg class="b" viewBox="0 0 24 24"><circle cx="12" cy="12" r="11" fill="#e5443a"/><path d="M12 12L2.500 6.500A11 11 0 0 0 12 23z" fill="#2da44e"/><path d="M12 12h11A11 11 0 0 1 11 23l6-9z" fill="#f9cf3a"/><circle cx="12" cy="12" r="5.500" fill="#fff"/><circle cx="12" cy="12" r="4.200" fill="#4a8af4"/></svg></button>
  <button title="Word"><svg class="b" viewBox="0 0 24 24"><path d="M13 3h10v18H13z" fill="#fff"/><path d="M14 7h8M14 10h8M14 13h8M14 16h8" stroke="#2b579a"/><path d="M0 3l14-3v24L0 21z" fill="#2b579a"/><path d="M3 8l2 8 2-7 2 7 2-8" fill="none" stroke="#fff" stroke-width="1.500"/></svg></button>
  <button title="Excel"><svg class="b" viewBox="0 0 24 24"><path d="M13 3h10v18H13z" fill="#fff"/><path d="M14 7h8M14 10h8M14 13h8M14 16h8M18 5v14" stroke="#217346"/><path d="M0 3l14-3v24L0 21z" fill="#217346"/><path d="M4 8l6 8M10 8l-6 8" stroke="#fff" stroke-width="2"/></svg></button>
  <button title="Civil 3D"><svg class="b"><use href="#logo"/></svg></button>
  <button title="HEC-HMS"><svg class="b" viewBox="0 0 24 24"><path d="M0 0h24v24H0z" fill="#8ff0ee"/><path d="M4 8l-3 6M10 8l-3 6M16 8l-3 6M22 8l-3 6" stroke="#2a8ca0"/><path d="M0 0h24v5q-4 5-8 1-4 4-8 0-4 3-8-1z" fill="#b4b4b4" stroke="#333"/><path d="M0 17q7-5 12 0 6-8 12-2v9H0z" fill="#0ae010" stroke="#063"/></svg></button>
  <button title="HEC-RAS"><svg class="b" viewBox="0 0 24 24"><path d="M0 0h24v24H0z" fill="#1c7f9e"/><path d="M0 0h24v3L0 5z" fill="#6cc0e0"/><path d="M7 16h10v8H5z" fill="#58c8f0"/><path d="M1 15h22v2H1zM5 17v7M19 17v7" stroke="#cdd" stroke-width="2"/><path d="M4 12V6h3v3H4l3 3M10 12l2-6 2 6M20 6h-3v3h3v3h-3" stroke="#fff" stroke-width="1.500" fill="none"/></svg></button>
  <button title="QGIS"><svg class="b" viewBox="0 0 24 24"><ellipse cx="11" cy="13" rx="5" ry="7.500" fill="none" stroke="#e8e86c" stroke-width="4"/><path d="M10 15l5 6h5" stroke="#e8e86c" stroke-width="3" fill="none"/><path d="M13 10q0-7 7-9 0 7-5 10z" fill="#4a9a2a"/></svg></button>
  <button title="EPANET"><svg class="b" viewBox="0 0 24 24"><circle cx="12" cy="5" r="4" fill="none" stroke="#20e8f0" stroke-width="3"/><path d="M1 9q5 3 6 7l5 3 5-3q1-4 6-7 1 11-6 13l-5 2-5-2Q0 20 1 9z" fill="#20e8f0"/><circle cx="12" cy="12" r="3" fill="#20e8f0"/></svg></button>
  <button title="SWMM"><svg class="b" viewBox="0 0 24 24"><circle cx="12" cy="12" r="11" fill="#eaf4fc" stroke="#2a78c0" stroke-width="2"/><circle cx="12" cy="9" r="5" fill="#5aa0dc"/><path d="M5 15q4-3 7 2 3-5 7-2-2 5-7 5t-7-5z" fill="#4a9a4a"/></svg></button>
  <button title="Culvert"><svg class="b" viewBox="0 0 24 24"><path d="M0 0h24v24H0z" fill="#6c94b8"/><path d="M6 4h11l6 8H1z" fill="#ede6d0" stroke="#333"/><path d="M0 13h24v6H0z" fill="#1030d0"/><path d="M0 19h24v5H0z" fill="#a8825a"/></svg></button>
  <button class="run" title="Notes"><svg class="b" viewBox="0 0 24 24"><path d="M3 3h18v13l-6 6H3z" fill="#f4e59a"/><path d="M21 14l-7 8v-6q4 0 7-2z" fill="#a89a4c"/></svg></button>
  <button class="run cur" title="AutoCAD"><svg class="b" viewBox="0 0 24 24"><path d="M0 0h24v24H0z" fill="#f7e6e2"/><path d="M10 3h4l7 18h-5L12 9 8 21H3z" fill="#b5202c"/><path d="M6 16q6-4 11-2" stroke="#8c1822" stroke-width="2.500" fill="none"/></svg></button>
  <div class="tray">
    <svg><circle cx="10" cy="4" r="2.500"/><circle cx="5" cy="8" r="2.500"/><path d="M1 15q0-4 4-4t4 4M7 8q6-3 7 4"/></svg>
    <svg><path d="M2 11l6-6 6 6"/></svg>
    <svg><path d="M4 3h11v8H4zM9 11v4M6 14.500h7M1 1h4v5H1z"/></svg>
    <svg><path d="M1 6h3l3-4v12L4 10H1zM10 6l5 5M15 6l-5 5"/></svg>
    <span>ESP</span>
    <time>07:10<br>27/11/2017</time>
    <svg class="note"><path d="M1 1h14v11h-5l-2 3-2-3H1z"/></svg>
  </div>
</div>

<section class="win netwin">
  <h1>Network Layout Tools - Sistema - (5)</h1>
  <div class="nbar"><svg><use href="#net"/></svg><svg><use href="#surface"/></svg><svg><use href="#align"/></svg><svg><use href="#pipe"/><path d="M9 7h6v9H9z" fill="#eee" stroke="#666"/></svg><div class="combo"><svg><use href="#struct"/></svg><select aria-label="Structure"><option>1.200 mm Cylindric</option></select></div></div>
  <div class="nfoot"><span>Parts List: DEHC-Pluvial PC</span><span>Surface</span></div>
</section>

<section class="win feat">
  <header><svg><use href="#logo"/></svg><h1>Edit Feature Settings - Pipe Network</h1><svg class="c fade" viewBox="0 0 12 12"><path d="M1 6.500h10" stroke="currentColor"/></svg><svg class="c" viewBox="0 0 12 12"><path d="M1.500 1.500h9v9h-9z" fill="none" stroke="currentColor"/></svg><svg class="c"><use href="#x"/></svg></header>
  <div class="grid">
    <div class="gridclip">
    <table>
      <colgroup><col class="k0"><col class="k1"><col class="k2"><col class="k2"><col class="k2"><col class="k2"></colgroup>
      <thead><tr><th colspan="2">Property</th><th>Value</th><th>Override</th><th>Child Override</th><th>Lock</th></tr></thead>
      <tbody>
        <tr class="g"><td><i class="ex"></i></td><td><svg><use href="#doc"/></svg>General</td><td></td><td></td><td></td><td></td></tr>
        <tr class="g"><td><i class="ex"></i></td><td><svg><use href="#doc"/></svg>Degree of Curvature</td><td></td><td></td><td></td><td></td></tr>
        <tr class="g"><td><i class="ex"></i></td><td><svg><use href="#doc"/></svg>Labeling</td><td></td><td></td><td></td><td></td></tr>
        <tr class="g"><td><i class="ex"></i></td><td><svg><use href="#doc"/></svg>Time</td><td></td><td></td><td></td><td></td></tr>
        <tr class="g"><td><i class="ex"></i></td><td><svg><use href="#net"/></svg>Default Styles</td><td></td><td></td><td></td><td></td></tr>
        <tr class="g"><td><i class="ex minus"></i></td><td><svg><use href="#net"/></svg>Default Name Format</td><td></td><td></td><td></td><td></td></tr>
        <tr><td></td><td>Interference Check Na...</td><td>InterferenceChec...</td><td></td><td></td><td><svg><use href="#lock"/></svg></td></tr>
        <tr><td></td><td>Interference Name Tem...</td><td>Interference - (&lt;[...</td><td></td><td></td><td><svg><use href="#lock"/></svg></td></tr>
        <tr><td></td><td>Network Name Template</td><td>Network - (&lt;[Ne...</td><td></td><td><svg><use href="#down"/></svg></td><td><svg><use href="#lock"/></svg></td></tr>
        <tr><td></td><td>Alignment From Netwo...</td><td>Alignment - (&lt;[P...</td><td></td><td><svg><use href="#down"/></svg></td><td><svg><use href="#lock"/></svg></td></tr>
        <tr class="cursel"><td></td><td><span>Structure Name Templa...</span></td><td>Structure - (&lt;[Ne...</td><td></td><td><svg><use href="#down"/></svg></td><td><svg><use href="#lock"/></svg></td></tr>
        <tr><td></td><td>Pipe Name Template</td><td>Pipe - (&lt;[Next C...</td><td></td><td><svg><use href="#down"/></svg></td><td><svg><use href="#lock"/></svg></td></tr>
        <tr class="g"><td><i class="ex"></i></td><td><svg><use href="#net"/></svg>Default Rules</td><td></td><td></td><td></td><td></td></tr>
        <tr class="g"><td><i class="ex"></i></td><td><svg><use href="#net"/></svg>Pipe Network Defaults</td><td></td><td></td><td></td><td></td></tr>
        <tr class="g"><td><i class="ex"></i></td><td><svg><use href="#net"/></svg>Storm Sewers Migrati...</td><td></td><td></td><td></td><td></td></tr>
      </tbody>
    </table>
    </div>
    <div class="vsb"><svg class="up"><use href="#chev"/></svg><b></b><svg><use href="#chev"/></svg></div>
  </div>
  <div class="desc"><p>Structure Name Template: Sets default name template for new structure name objects.<br>Parent Value: N/A<br>Parent: Current</p>
    <div><button title="Expand all"><svg><path d="M1 1h5v5H1zM1 9h5v5H1z" fill="#fff" stroke="#777"/><path d="M9 9l3-4 3 4z" fill="#333"/></svg></button><button title="Collapse all"><svg><path d="M1 1h5v5H1zM3.500 6v9" fill="#fff" stroke="#777"/><path d="M9 6l3 4 3-4z" fill="#333"/></svg></button><button title="Override all"><svg><path d="M1 2h12v11H1z" fill="#eef" stroke="#889"/><path d="M4 6l3 4 7-8" fill="none" stroke="#3a3" stroke-width="2.500"/><path d="M13 8v6M11 12l2 3 2-3" stroke="#27c" stroke-width="1.500" fill="none"/></svg></button></div>
  </div>
  <div class="btns"><button>Aceptar</button><button>Cancelar</button><button>Apply</button><button>Ayuda</button></div>
  <svg class="gripc" viewBox="0 0 12 12"><path d="M12 0L0 12M12 4l-8 8M12 8l-4 4" stroke="#999"/></svg>
</section>

<section class="win name">
  <header><svg><use href="#logo"/></svg><h1>Name Template</h1><svg class="c"><use href="#x"/></svg></header>
  <form>
    <fieldset><legend>Name formatting template</legend>
      <label for="pf">Property fields:</label>
      <div class="row"><select class="light" id="pf"><option>Network name</option></select><button type="button">Insert</button></div>
      <label for="nm">Name:</label>
      <input id="nm" class="marked" type="text" value="Structure - (&lt;[Next Counter(CP)]&gt;)">
    </fieldset>
    <fieldset><legend>Incremental number format</legend>
      <label for="ns">Number style:</label>
      <select class="light" id="ns"><option>1, 2, 3...</option></select>
      <div class="pair"><div><label for="st">Starting number:</label><input id="st" type="text" value="1"></div><div><label for="iv">Increment value:</label><input id="iv" type="text" value="1"></div></div>
    </fieldset>
    <div class="btns"><button type="button" class="def">OK</button><button type="button">Cancel</button><button type="button">Help</button></div>
  </form>
  <svg class="gripc" viewBox="0 0 12 12"><path d="M12 0L0 12M12 4l-8 8M12 8l-4 4" stroke="#999"/></svg>
</section>
</body>
</html>
```
FILE: styles.css
```css
*{box-sizing:border-box}
body{margin:0;height:100vh;display:grid;grid-template-columns:minmax(0,1fr);grid-template-rows:24px 22px 20px 98px 26px minmax(0,1fr) 29px 40px;font:11px/16px "Noto Sans","Open Sans",sans-serif;background:#393939;color:#f0f0f0;overflow:hidden;position:relative}
a{color:inherit;text-decoration:none}
h1,h2,p,ul{margin:0;padding:0;font-size:11px;font-weight:400}
button,input,select{font:inherit;color:inherit}
button{background:none;border:0;padding:0;display:flex;align-items:center}
svg{width:16px;height:16px;flex:none;display:block}
.defs{position:absolute;width:0;height:0}
.ar{display:inline-block;flex:none;border:3px solid transparent;border-top:4px solid #f0f0f0;border-bottom:0}
.ar.big{border-width:4px;border-top-width:5px;border-bottom-width:0}
.ar.dim{opacity:.7}
.ar.east{border:4px solid transparent;border-left:5px solid #fff;border-right:0;margin-left:5px}
.ar.bar{border-width:4px;border-top-width:5px;border-bottom-width:0;box-shadow:0 -8px 0 -6px #fff}
.combo{display:flex;align-items:center}
.combo select{appearance:none;flex:1;min-width:0;background:none;border:0;padding:0}

/* title bar */
.titlebar{display:flex;background:#fff;color:#000;padding-left:40px}
.qat{width:371px;flex:none;display:flex;align-items:center;gap:8px;padding-left:10px;background:linear-gradient(#a2a2a2,#7d7d7d);border-right:1px solid #777}
.qat button+.ar{margin-left:-1px;margin-right:4px}
.wspick{width:179px;height:22px;margin-left:-4px;background:linear-gradient(#696969,#565656);border:1px solid #3c3c3c;color:#fff;padding:0 2px 0 3px;gap:4px}
.wspick select{font-size:12px}
.qat .bar{margin:0 0 0 -4px}
.caption{flex:1;min-width:0;display:flex;justify-content:center;align-items:center;gap:14px;white-space:nowrap}
.info{width:447px;flex:none;display:flex;align-items:center;gap:6px;background:linear-gradient(#a2a2a2,#7d7d7d);border:1px solid #6b6b6b;border-top:0;color:#fff}
.info input{width:180px;height:22px;margin-left:-3px;background:#6d6d6d;border:1px solid #3c3c3c;padding:0 4px;font-style:italic}
.info input::placeholder{color:#ddd;opacity:1}
.info .sign{width:110px;gap:6px}
.sign .ar{margin-left:auto;margin-right:2px}
.info .help{width:16px;height:16px;border-radius:50%;background:#fff;border:1px solid #334;color:#1f3f9f;font-weight:700;justify-content:center;margin-left:13px}
.wins{width:163px;flex:none;display:flex;align-items:center;justify-content:flex-end;gap:34px;padding-right:19px;padding-bottom:2px;color:#000}
.wins svg{width:12px;height:12px}

/* menus and ribbon tabs */
.menubar{display:grid;grid-template-columns:40px 42px 47px 51px 58px 49px 51px 62px 85px 59px 64px 82px 61px 70px 66px 46px 74px 55px 66px 1fr auto;align-items:center;padding:0 6px 0 54px;background:linear-gradient(#9c9c9c,#5a5a5a);border-top:1px solid #333;border-bottom:1px solid #2e2e2e;color:#fff}
.mdi{display:flex;gap:5px}
.mdi svg{width:12px;height:12px}
.app{position:absolute;left:0;top:0;width:41px;height:41px;flex-direction:column;justify-content:center;background:linear-gradient(#c8c8c8,#7c7c7c);border:1px solid #000;color:#000}
.app svg{width:36px;height:27px}
.app span{font:700 9px/9px "DejaVu Sans",sans-serif}
.tabs{display:grid;grid-template-columns:50px 49px 69px 58px 61px 45px 63px 58px 55px 91px 130px 45px 62px 90px 108px 1fr;align-items:center;padding-left:4px;background:#545454;border-bottom:1px solid #333;color:#d8d8d8;height:20px;line-height:20px}
.tabs a{padding-left:11px;height:19px}
.tabs .on{padding-left:9px;background:#5e5e5e;border:1px solid #333;border-width:0 1px;color:#fff;box-shadow:0 -1px 0 #333}
.mini{display:flex;gap:6px;align-items:center}
.mini b{width:13px;height:9px;background:#ddd;border-radius:2px}

/* ribbon */
.ribbon{display:flex;background:linear-gradient(#525252,#383838);border-bottom:1px solid #777;min-width:0}
.panel{display:flex;flex-direction:column;flex:none;background:#5b5b5b;border-right:1px solid #3f3f3f;border-left:1px solid #696969;border-bottom:1px solid #2c2c2c;padding-top:5px}
.panel .body{flex:1;display:grid;grid-auto-rows:24px;align-content:start;color:#7b7b7b}
.panel h2{height:17px;line-height:17px;text-align:center;background:linear-gradient(#4a4a4a,#404040);color:#fff;white-space:nowrap}
.panel h2 .ar{margin:0 0 1px 3px}
.panel .body button{gap:6px;height:24px;white-space:nowrap}
.panel .body svg{filter:grayscale(1) brightness(.95);opacity:.75}
.panel .body .large{flex-direction:column;height:auto;gap:5px;line-height:16px;justify-content:flex-start}
.large svg{width:32px;height:32px}
.p-pal{width:115px}.p-ground{width:128px}.p-design{width:321px}.p-prof{width:131px}.p-draw{width:118px}.p-mod{width:250px}.p-lay{width:273px}.p-clip{width:80px}
.panel.p-pal .body{display:flex;gap:2px;padding-left:3px}
.panel.p-pal .large{width:58px;height:71px;padding-top:4px;color:#6c7786}
.panel .body .blue{background:linear-gradient(#7d96b8,#566f93);border:1px solid #3d4c63}
.six{display:grid;grid-template-columns:24px 24px;grid-auto-rows:24px}
.six button{justify-content:center}
.panel .body .six .blue{height:22px}
.p-ground .body{padding-left:23px}
.p-design .body{padding-left:6px;grid-template-columns:105px 98px auto}
.p-prof .body{padding-left:8px}
.p-draw .body{padding-left:6px;grid-template-columns:37px 40px auto}
.panel.p-draw .body button{gap:5px}
.p-mod .body{padding-left:6px;grid-template-columns:71px 70px 75px 20px}
.panel.p-lay .body{grid-template-columns:60px 1fr;grid-auto-rows:auto}
.layr{display:grid;grid-template-rows:24px 24px 24px;align-items:center}
.laypick{width:209px;height:22px;background:#6b6b6b;border:1px solid #3c3c3c;padding:0 3px;gap:4px;color:#a8a8a8}
.panel .body .laypick svg{filter:none;opacity:.9}
.sw{width:14px;height:14px;background:#b52ab5;border:1px solid #222}
.lrow{display:flex;gap:8px;align-items:center;padding-left:5px;white-space:nowrap}
.lrow span{margin-left:-3px}
.panel.p-clip .body{grid-template-columns:54px 1fr;grid-auto-rows:auto}
.three{display:grid;grid-auto-rows:24px;align-items:center}

/* drawing tabs */
.files{display:flex;align-items:flex-end;padding-left:18px;background:#393939;border-bottom:4px solid #5c5c5c;height:30px;color:#b8b8b8;position:relative}
.ft{width:128px;height:22px;line-height:22px;padding-left:14px;background:#555;border-radius:10px 10px 0 0}
.ft.on{width:252px;padding-left:9px;background:linear-gradient(#7a7a7a,#5c5c5c);color:#fff;display:flex;align-items:center;gap:10px}
.ft svg{width:8px;height:8px;color:#222}
.plus{width:22px;height:18px;margin:0 0 3px 4px;justify-content:center;background:#555;border-radius:8px;font-weight:700;font-size:14px}

/* workspace */
.work{display:flex;min-height:0;background:#5c5c5c}
.toolspace{width:245px;flex:none;display:flex;padding-top:6px}
.tsmain{width:221px;display:flex;flex-direction:column}
.tsmain h1{height:22px;line-height:20px;padding-left:15px;font-size:12px;background:#525252}
.tsbar{height:29px;display:flex;justify-content:flex-end;align-items:center;gap:11px;padding-right:6px}
.q{width:16px;height:16px;background:#eee;color:#222;justify-content:center;font-weight:700;border:1px solid #333}
.light{appearance:none;border:1px solid #adadad;color:#000;border-radius:0;padding:0 2px;background:linear-gradient(45deg,transparent 45%,#555 45%,#555 60%,transparent 60%) right 10px center/5px 5px no-repeat,linear-gradient(-45deg,transparent 45%,#555 45%,#555 60%,transparent 60%) right 6px center/5px 5px no-repeat,#e2e2e2}
.tsmain .light{height:22px}
.treebox{flex:1;min-height:0;margin-top:2px;display:grid;grid-template:minmax(0,1fr) 16px/minmax(0,1fr) 16px;background:#fff;border:1px solid #8a8a8a;padding:1px;color:#000}
.tree{list-style:none;overflow:hidden}
.tree li{height:20px;display:flex;align-items:center;padding-left:26px;position:relative;white-space:nowrap}
.tree li svg{margin:0 3px 0 6px}
.tree li span{flex:1;line-height:20px;padding:0 0 0 4px}
.tree .root{padding-left:7px;font-weight:700}
.tree .sel span{background:#a0a0a0;height:19px}
.tree .kid{padding-left:45px}
.tree li:not(.root)::before{content:"";position:absolute;left:31px;top:0;height:20px;border-left:1px dotted #777}
.tree .kid::after{content:"";position:absolute;left:50px;top:0;height:20px;border-left:1px dotted #777}
.ex{width:9px;height:9px;flex:none;border:1px solid #777;background:linear-gradient(#24418c,#24418c) center/5px 1px no-repeat,linear-gradient(#24418c,#24418c) center/1px 5px no-repeat,#fff;z-index:1;margin:1px}
.ex.minus{background:linear-gradient(#24418c,#24418c) center/5px 1px no-repeat,#fff}
.vsb{display:flex;flex-direction:column;align-items:center;background:#f0f0f0;color:#333;padding:5px 0}
.vsb b{align-self:stretch;background:#cdcdcd;margin-top:6px;margin-bottom:auto;height:463px}
.vsb svg,.hsb svg{width:10px;height:6px}
.up{transform:rotate(180deg)}
.hsb{grid-column:1/3;display:flex;align-items:center;background:#f0f0f0;color:#333;padding:0 20px 0 4px}
.hsb b{width:124px;height:15px;background:#cdcdcd;margin:0 auto 0 4px}
.lf{transform:rotate(90deg)}.rt{transform:rotate(-90deg)}
.preview{height:94px;margin:7px 0 4px;border:1px solid #9a9a9a}
.vtabs{width:21px;padding-top:23px;display:flex;flex-direction:column}
.vtabs a{height:127px;writing-mode:vertical-rl;transform:rotate(180deg);text-align:center;line-height:20px;font-size:12px;background:#515151;border:1px solid #353535;border-radius:4px 0 0 4px;color:#a8a8a8}
.vtabs .on{color:#fff;background:#5c5c5c}

/* drawing canvas */
.canvas{flex:1;min-width:0;margin-top:4px;background:#212830;position:relative;overflow:hidden}
.canvas>svg{width:100%;height:100%}
.ln{fill:none;stroke-width:1.2}
.cy{stroke:#0c93c9}.or{stroke:#cc4a1c}.gy{stroke:#a8a8ac}.dk{stroke:#5e5e62}.sa{stroke:#d86a68}.tan{stroke:#dcb868}.bl{stroke:#2c86dc}.nb{stroke:#1268d0}.cream{stroke:#d8d4b8}.grn{stroke:#0c9050}.yl{stroke:#f4ec18;stroke-width:1.6}.pale{stroke:#8c8850}.mg{stroke:#f010e8;stroke-width:1.8}.rd{stroke:#d00808}.ylb{stroke:#f4ec18;stroke-width:2}
.bold{stroke-width:1.5}.thin{stroke-width:1.2}
.h19{stroke-width:18;stroke-dasharray:1.2 5}
.h19.w30{stroke-width:28}
.h44{stroke-width:44;stroke-dasharray:1.2 41}
.h24{stroke-width:24;stroke-dasharray:1.2 6}
.long{stroke-width:130;stroke-dasharray:1.2 41}
.ticks{fill:none;stroke:#e01010;stroke-width:14;stroke-dasharray:1.2 57}
.cad{font:200 17px "DejaVu Sans",sans-serif;fill:#f0ec14}
.cad.red{fill:#ec0c0c;font-size:18px}
.ucs{fill:none;stroke:#e8e8e8}
.vp{fill:#fff}
.cmd{position:absolute;left:175px;bottom:1px;width:953px;height:26px;display:flex;align-items:center;background:rgba(222,222,222,.84);border:1px solid #666;margin:0}
.grip{width:54px;height:24px;background:linear-gradient(#6a6a6a,#3e3e3e);display:flex;align-items:center;gap:8px;padding-left:3px;color:#ddd}
.grip i{width:5px;height:18px;background:repeating-linear-gradient(#999 0 1px,transparent 1px 3px)}
.grip svg:nth-of-type(1){width:10px;height:10px}
.cmd b{width:15px;height:14px;margin:0 4px 0 5px;background:#7b8794;color:#fff;font:700 9px/12px "DejaVu Sans Mono",monospace;border:1px solid #556}
.cmd .ar{border-top-color:#555}
.cmd input{flex:1;background:none;border:0;font:italic 12px "Liberation Mono",monospace;padding:0 6px}
.cmd input::placeholder{color:#6c6c6c;opacity:1}
.cmd .upk{transform:rotate(180deg);margin-right:4px;border-top-color:#222}

/* properties */
.side{width:371px;flex:none;display:flex;padding:0 18px 0 4px}
.strip{width:25px;padding-top:476px}
.grp{width:25px;background:#525252;border:1px solid #333;display:flex;flex-direction:column;align-items:center;gap:6px;padding:3px 0;margin-bottom:2px}
.grp.g1{height:82px;padding-top:19px}
.dots{width:13px;height:3px;border-top:1px dotted #aaa;border-bottom:1px dotted #aaa}
.objtab{width:37px;padding:300px 0 0 5px}
.objtab a{display:block;width:22px;height:238px;writing-mode:vertical-rl;transform:rotate(180deg);font-size:12px;line-height:21px;padding-top:32px;background:#515151;border:1px solid #353535;border-radius:4px 0 0 4px;color:#a8a8a8}
.props{flex:1;min-width:0}
.props h1{height:22px;line-height:20px;margin:6px -18px 11px 0;padding-left:2px;background:#525252}
.pick{display:flex;gap:9px;align-items:center;height:24px;margin-bottom:3px}
.pick .combo{width:222px;height:24px;padding:0 4px 0 6px;background:linear-gradient(#707070,#606060);border:1px solid #3c3c3c;margin-right:-1px}
.pick .combo .ar{box-shadow:none}
.props .pick svg:last-child{margin-right:-8px}
.props table{width:100%;table-layout:fixed;border-collapse:separate;border-spacing:0;margin-bottom:4px;padding-left:17px}
.props caption{height:20px;line-height:18px;margin:0;text-align:left;font-weight:700;padding:0 7px;background:linear-gradient(#fff,#fff) right 7px center/6px 1px no-repeat,#484848;border:1px solid #363636}
.props th,.props td{height:20px;padding:0 0 0 7px;text-align:left;font-weight:400;line-height:18px;border-bottom:1px solid #4c4c4c;border-right:1px solid #4c4c4c;white-space:nowrap}
.props th{width:124px}
.props td{padding-left:3px}
.props .ro{color:#a0a0a0}
.cyan{display:inline-block;width:10px;height:9px;background:#0ff;border:1px solid #000;margin:0 6px 0 1px}
.line{display:inline-block;width:64px;height:4px;border-top:1px solid #fff;margin:0 5px 0 2px}

/* status bar */
.status{display:flex;background:#393939;border-top:1px solid #5c5c5c;justify-content:space-between}
.layouts{display:flex;padding-left:13px;height:18px;color:#b0b0b0}
.layouts a{width:62px;text-align:center;background:#505050;border-radius:0 0 12px 12px;margin-right:3px;line-height:17px;font-size:12px}
.layouts .on{width:54px;background:linear-gradient(#5c5c5c,#7a7a7a);color:#fff;font-weight:700;font-size:11px}
.layouts button{width:20px;height:16px;justify-content:center;background:#505050;border-radius:0 0 8px 8px;font-weight:700;margin-left:5px}
.sb{display:flex;height:27px;font-size:12px}
.sb>div{display:flex;align-items:center;justify-content:center;gap:7px;background:#474747;border:1px solid #777;color:#f0f0f0;margin-left:1px}
.sb>div svg{color:#bbb}
.sb>div .act{color:#2a8cff}
.s1{width:48px}.s2{width:65px}.s3{width:103px}.s4{width:64px}.s5{width:163px}.s6{width:40px}.s7{width:25px}.s8{width:61px}.s9{width:25px}.s10{width:26px}.s11{width:51px}.s12{width:51px}
.sb .s2,.sb .s3,.sb .s5{gap:6px}

/* taskbar */
.taskbar{display:flex;background:#020408}
.taskbar button{width:49px;justify-content:center;border-bottom:2px solid transparent}
.taskbar .b{width:24px;height:24px}
.taskbar .wide{width:20px}
.taskbar .run{background:linear-gradient(#76b9ed,#76b9ed) center bottom/40px 2px no-repeat;background-origin:border-box;background-clip:border-box}
.taskbar .cur{background:#33373c;border-bottom-color:#76b9ed}
.tray{margin-left:auto;display:flex;align-items:center;gap:8px;padding-right:25px}
.tray svg{fill:none;stroke:#fff}
.tray svg:first-child{margin-right:12px}
.tray span{margin:0 4px 0 6px}
.tray time{text-align:center;width:62px;margin-right:4px}

/* windows */
.win{position:absolute;background:#f0f0f0;color:#000;box-shadow:0 2px 14px rgba(0,0,0,.45)}
.win header{height:31px;background:#fff;display:flex;align-items:center;padding:0 10px 0 9px}
.win header h1{flex:1;padding-left:5px}
.win .c{width:12px;height:12px}
.win .btns{display:flex;justify-content:flex-end;gap:8px}
.win .btns button,.name .row button{width:76px;height:21px;justify-content:center;background:#e1e1e1;border:1px solid #adadad}
.gripc{position:absolute;right:0;bottom:0;width:12px;height:12px}
.netwin{left:762px;top:284px;width:400px;height:83px;background:#dbe6f2;border:1px solid #444;padding:0 7px}
.netwin h1{height:30px;line-height:38px;color:#9a9fa8;background:linear-gradient(#c4d2e0,#dbe6f2);margin:0 -7px;padding-left:7px}
.nbar{height:27px;background:#f0f0f0;display:flex;align-items:center;gap:15px;padding-left:5px;border-bottom:1px solid #ccc}
.nbar>svg+svg{box-shadow:-8px 0 0 0 #f0f0f0,-9px 0 0 0 #aaa}
.nbar .combo{height:21px;width:300px;flex:none;border:1px solid #888;background:#fff;padding-left:3px;gap:3px;margin-left:-3px}
.nfoot{height:19px;background:#f0f0f0;display:flex;line-height:19px;overflow:hidden}
.nfoot span{width:210px;flex:none;padding-left:2px;border-right:1px solid #ccc}
.nfoot span+span{padding-left:5px;width:auto;border:0}

.feat{left:1003px;top:187px;width:668px;height:491px;border-top:1px solid #555}
.feat header{height:29px;color:#9a9a9a;padding-right:17px}
.feat header svg:first-child{opacity:.85}
.feat header .c{margin-left:34px}
.feat .fade{opacity:.4}
.grid{display:flex;margin:14px 14px 0 13px;height:322px;border:1px solid #999;border-right-color:#fff;border-bottom-color:#fff;box-shadow:inset 1px 1px 0 #555}
.gridclip{flex:1;overflow:hidden;padding:1px 0 0 1px}
.feat table{width:620px;table-layout:fixed;border-collapse:separate;border-spacing:0}
.k0{width:17px}.k1{width:155px}.k2{width:112px}
.feat th{height:24px;text-align:left;font-weight:400;padding:2px 0 0 7px;background:#f0f0f0;border-right:1px solid #999;border-bottom:1px solid #999}
.feat th:last-child{border-right:0}
.feat td{height:20px;padding:1px 0 0 5px;background:#ffffeb;border-right:1px solid #ffbcbc;border-bottom:1px solid #bcbcff;white-space:nowrap;overflow:hidden;line-height:18px}
.feat td:first-child{border-bottom:0;background:#f6f6f6;padding:0 0 0 6px}
.feat .g td:first-child{background:#ffffeb}
.feat td:nth-child(2){padding-left:20px}
.feat .g td:nth-child(2){padding-left:2px;font-weight:700}
.g td svg{float:left;margin:-1px 1px 0 0;height:16px}
.feat td:nth-child(n+5){padding:0 4px 0 0}
.feat td:nth-child(n+5) svg{margin:0 auto;height:16px;width:14px}
.feat .ex{display:block;border-color:#222;margin:0}
.cursel td:nth-child(2) span{background:#f0f0f0;display:block}
.feat .cursel td:nth-child(3){outline:1px dotted #000;outline-offset:-2px}
.feat .vsb{width:16px;padding:8px 0 6px}
.feat .vsb b{height:112px;margin-top:4px}
.desc{display:flex;margin:8px 14px 0 13px;gap:8px;height:71px;font-family:Roboto,sans-serif}
.desc p{flex:1;border:1px solid #fff;border-top:2px solid #777;border-left-color:#777;line-height:13px}
.desc div{display:grid;gap:3px}
.desc button{width:22px;height:21px;justify-content:center;background:#e6e6e6;border:1px solid #adadad}
.feat .btns{margin:13px 13px 0 0}

.name{left:559px;top:375px;width:439px;height:328px;font-family:Roboto,sans-serif}
.name header{font-family:"Noto Sans",sans-serif}
.name form{padding:6px 13px 0}
.name fieldset{margin:0 0 6px;border:1px solid #dcdcdc;padding:0 11px;height:117px;min-width:0}
.name legend{padding:0 6px;margin-left:-9px;line-height:16px}
.name label{display:block;height:16px;line-height:16px;margin:8px 0 1px}
.name select,.name input{height:21px;display:block;width:100%;border-radius:0}
.name .row{display:flex;gap:13px;margin-bottom:-1px}
.name .row select{width:300px}
.name fieldset>select{width:390px}
.pair{display:flex;gap:6px}
.pair div{width:138px}
.name input{border:1px solid #777;background:#fff;color:#000;padding:0 5px;height:20px}
.name .marked{width:390px;border-color:#0078d7;padding:0 4px;font-family:"Noto Sans",sans-serif;color:#fff;background:linear-gradient(#0078d7,#0078d7) 4px 2px/174px 14px no-repeat,#fff}
.name .btns{margin-top:15px}
.name .btns .def{border:2px solid #0078d7}
```
